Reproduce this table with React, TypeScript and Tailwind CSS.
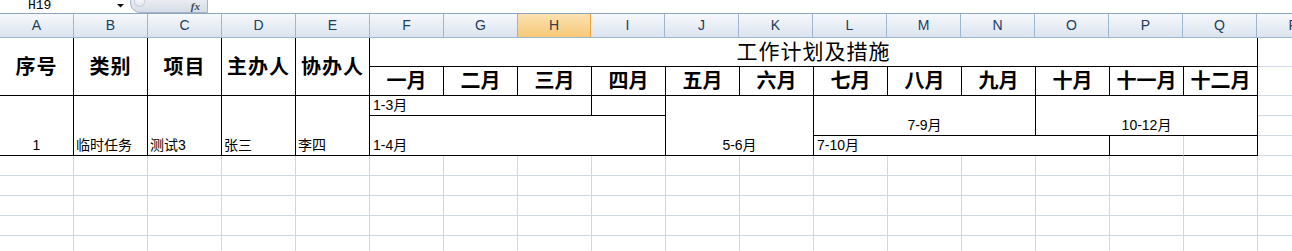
import React from 'react';

const cols = ['A', 'B', 'C', 'D', 'E', 'F', 'G', 'H', 'I', 'J', 'K', 'L', 'M', 'N', 'O', 'P', 'Q', 'R'];
const months = ['一月', '二月', '三月', '四月', '五月', '六月', '七月', '八月', '九月', '十月', '十一月', '十二月'];
const monthPos = [
  'col-start-6', 'col-start-7', 'col-start-8', 'col-start-9', 'col-start-10', 'col-start-11',
  'col-start-12', 'col-start-13', 'col-start-14', 'col-start-15', 'col-start-16', 'col-start-17',
];

const heads = [
  { text: '序号', pos: 'col-start-1' },
  { text: '类别', pos: 'col-start-2' },
  { text: '项目', pos: 'col-start-3' },
  { text: '主办人', pos: 'col-start-4' },
  { text: '协办人', pos: 'col-start-5' },
];

const row3 = [
  { text: '1', pos: 'col-start-1', align: 'justify-center' },
  { text: '临时任务', pos: 'col-start-2', align: 'justify-start pl-[2px]' },
  { text: '测试3', pos: 'col-start-3', align: 'justify-start pl-[2px]' },
  { text: '张三', pos: 'col-start-4', align: 'justify-start pl-[2px]' },
  { text: '李四', pos: 'col-start-5', align: 'justify-start pl-[2px]' },
];

const black = 'border-r border-b border-black';
const grid = 'border-r border-b border-[#d0d7e5]';

const FormulaBar = () => (
  <div className="h-[14px] border-b border-[#8ea3bd] flex overflow-hidden bg-white">
    <div className="w-[130px] shrink-0 relative">
      <span className="absolute left-[28px] top-0 font-['Liberation_Mono',monospace] text-[13px] leading-[12px] text-black">
        H19
      </span>
      <svg className="absolute left-[117px] top-[4px]" width="8" height="4" viewBox="0 0 8 4">
        <polygon points="0,0 7,0 3.5,3.5" fill="#111" />
      </svg>
    </div>
    <div className="w-[78px] shrink-0 -mt-[8px] h-[21px] rounded-bl-[10px] rounded-tl-[10px] border border-[#a5b3c5] bg-gradient-to-b from-[#f4f6f9] to-[#d6dde6] relative">
      <div className="absolute left-[3px] top-[3px] w-[11px] h-[11px] rounded-full bg-gradient-to-b from-[#ffffff] to-[#dfe5ec] border border-[#c3ccd8]" />
      <span className="absolute right-[7px] top-[8px] font-['Liberation_Serif',serif] italic font-bold text-[11px] leading-[11px] text-[#3c4a5c]">
        fx
      </span>
    </div>
    <div className="flex-1 bg-white" />
  </div>
);

const ColumnHeader = () => (
  <div className="h-[24px] flex border-b border-[#9eb6ce] font-['Liberation_Sans',sans-serif] text-[14px]">
    {cols.map((c) => (
      <div
        key={c}
        className={
          c === 'H'
            ? 'w-[74px] shrink-0 flex items-center justify-center border-r border-l border-[#eda544] -ml-[1px] bg-gradient-to-b from-[#fbe2b0] to-[#f6c978] text-[#2e3b4a]'
            : 'w-[74px] shrink-0 flex items-center justify-center border-r border-[#9eb6ce] bg-gradient-to-b from-[#f6f9fc] to-[#dbe3ee] text-[#213d5e]'
        }
      >
        {c}
      </div>
    ))}
  </div>
);

export default function App() {
  return (
    <div className="w-[1292px] h-[251px] overflow-hidden bg-white">
      <FormulaBar />
      <ColumnHeader />
      <div className="grid grid-cols-[repeat(18,74px)] grid-rows-[29px_29px] auto-rows-[20px] font-['Liberation_Sans','Noto_Sans_CJK_SC',sans-serif] text-black">
        {heads.map((h) => (
          <div
            key={h.text}
            className={`${h.pos} row-start-1 row-span-2 ${black} flex items-center justify-center text-[20px] font-bold tracking-[1px]`}
          >
            {h.text}
          </div>
        ))}
        <div className={`col-start-6 col-span-12 row-start-1 ${black} flex items-center justify-center text-[21px] tracking-[1px]`}>
          工作计划及措施
        </div>
        <div className={`col-start-18 row-start-1 ${grid}`} />
        {months.map((m, i) => (
          <div
            key={m}
            className={`${monthPos[i]} row-start-2 ${black} flex items-center justify-center text-[20px] font-bold`}
          >
            {m}
          </div>
        ))}
        <div className={`col-start-18 row-start-2 ${grid}`} />

        {row3.map((d) => (
          <div
            key={d.text}
            className={`${d.pos} row-start-3 row-span-3 ${black} flex items-end ${d.align} text-[14px] leading-[18px] pb-[1px]`}
          >
            {d.text}
          </div>
        ))}
        <div className={`col-start-6 col-span-3 row-start-3 ${black} flex items-end pl-[3px] text-[14px] leading-[18px] pb-[1px]`}>
          1-3月
        </div>
        <div className={`col-start-9 row-start-3 ${black}`} />
        <div className={`col-start-10 col-span-2 row-start-3 row-span-3 ${black} flex items-end justify-center text-[14px] leading-[18px] pb-[1px]`}>
          5-6月
        </div>
        <div className={`col-start-12 col-span-3 row-start-3 row-span-2 ${black} flex items-end justify-center text-[14px] leading-[18px] pb-[1px]`}>
          7-9月
        </div>
        <div className={`col-start-15 col-span-3 row-start-3 row-span-2 ${black} flex items-end justify-center text-[14px] leading-[18px] pb-[1px]`}>
          10-12月
        </div>
        <div className={`col-start-18 row-start-3 ${grid}`} />
        <div className={`col-start-6 col-span-4 row-start-4 row-span-2 ${black} flex items-end pl-[3px] text-[14px] leading-[18px] pb-[1px]`}>
          1-4月
        </div>
        <div className={`col-start-18 row-start-4 ${grid}`} />
        <div className={`col-start-12 col-span-4 row-start-5 ${black} flex items-end pl-[3px] text-[14px] leading-[18px] pb-[1px]`}>
          7-10月
        </div>
        <div className="col-start-16 row-start-5 border-r border-b border-r-[#d0d7e5] border-b-black" />
        <div className={`col-start-17 row-start-5 ${black}`} />
        <div className={`col-start-18 row-start-5 ${grid}`} />

        {Array.from({ length: 18 * 5 }).map((_, i) => (
          <div key={i} className={grid} />
        ))}
      </div>
    </div>
  );
}
